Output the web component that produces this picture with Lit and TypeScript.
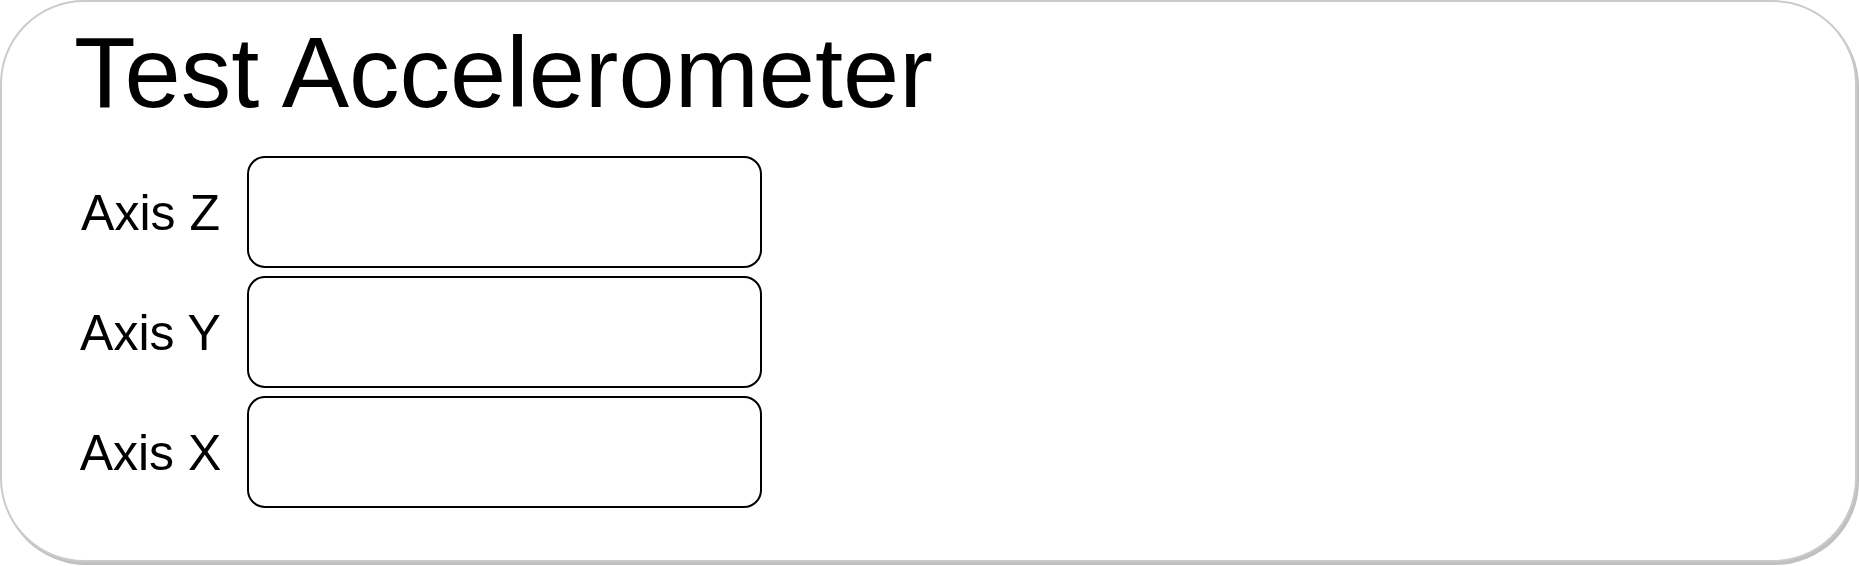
import { LitElement, html, css } from "lit";
import { customElement } from "lit/decorators.js";

@customElement("app-root")
export class AppRoot extends LitElement {
  static styles = css`
    :host {
      display: block;
      font-family: "Liberation Sans", Arial, Helvetica, sans-serif;
      color: #000;
    }
    .card {
      box-sizing: border-box;
      margin: 0 2px 4px 0;
      padding: 10px 72px 52px 72px;
      border: 2px solid #cbcbcb;
      border-radius: 84px;
      background: #fff;
      box-shadow: 2px 3px 0 #c0c0c0;
    }
    h1 {
      margin: 0;
      font-size: 101px;
      line-height: 120px;
      font-weight: 400;
    }
    .fields {
      display: grid;
      grid-template-columns: 153px minmax(0, 515px);
      column-gap: 20px;
      row-gap: 8px;
      align-items: center;
      margin-top: 24px;
    }
    label {
      padding-top: 2px;
      font-size: 50px;
      line-height: 60px;
      text-align: center;
      white-space: nowrap;
    }
    input {
      box-sizing: border-box;
      width: 100%;
      height: 112px;
      padding: 0 16px;
      border: 2px solid #000;
      border-radius: 18px;
      background: #fff;
      font: inherit;
      font-size: 50px;
    }
  `;

  render() {
    return html`
      <main class="card">
        <h1>Test Accelerometer</h1>
        <form class="fields">
          ${["Z", "Y", "X"].map(
            (axis) => html`
              <label for="axis-${axis}">Axis ${axis}</label>
              <input id="axis-${axis}" type="text" />
            `
          )}
        </form>
      </main>
    `;
  }
}
